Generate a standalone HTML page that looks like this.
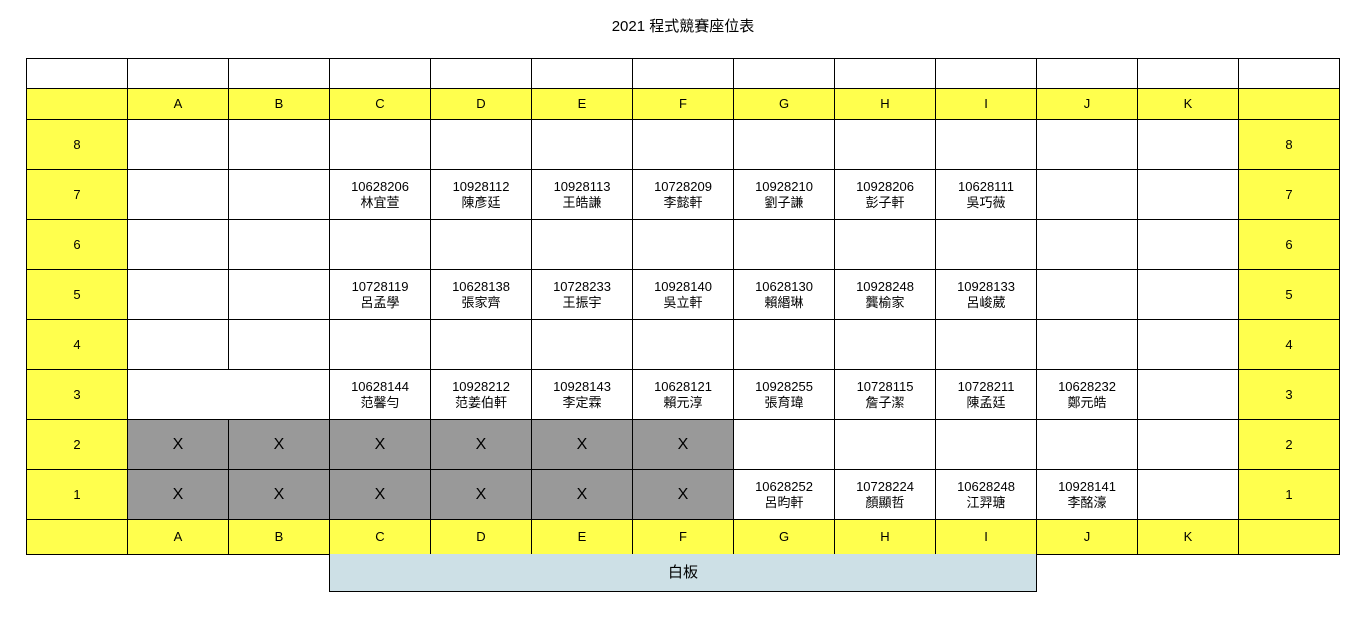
<!DOCTYPE html>
<html><head><meta charset="utf-8"><style>
body{margin:0;background:#fff;width:1366px;height:617px;position:relative;font-family:"Liberation Sans","Noto Sans CJK TC",sans-serif;color:#000}
.title{position:absolute;left:0;width:1366px;top:15px;text-align:center;font-size:15px}
table{position:absolute;left:26px;top:58px;border-collapse:collapse;table-layout:fixed;width:1314px}
td{border:1px solid #000;text-align:center;vertical-align:middle;font-size:13px;line-height:16px;padding:0;overflow:hidden}
.y{background:#ffff4d}
.g{background:#999;font-size:16px}
.wb{position:absolute;left:329px;top:554px;width:706px;height:37px;background:#cde0e6;border:1px solid #000;border-top:none;text-align:center;line-height:38px;font-size:15px}
</style></head><body>
<div class="title">2021 程式競賽座位表</div>
<table>
<colgroup><col style="width:101px"><col style="width:101px"><col style="width:101px"><col style="width:101px"><col style="width:101px"><col style="width:101px"><col style="width:101px"><col style="width:101px"><col style="width:101px"><col style="width:101px"><col style="width:101px"><col style="width:101px"><col style="width:101px"></colgroup>
<tr style="height:30px"><td></td><td></td><td></td><td></td><td></td><td></td><td></td><td></td><td></td><td></td><td></td><td></td><td></td></tr>
<tr style="height:31px" class="y"><td></td><td>A</td><td>B</td><td>C</td><td>D</td><td>E</td><td>F</td><td>G</td><td>H</td><td>I</td><td>J</td><td>K</td><td></td></tr>
<tr style="height:50px"><td class="y">8</td><td></td><td></td><td></td><td></td><td></td><td></td><td></td><td></td><td></td><td></td><td></td><td class="y">8</td></tr>
<tr style="height:50px"><td class="y">7</td><td></td><td></td><td>10628206<br>林宜萱</td><td>10928112<br>陳彥廷</td><td>10928113<br>王皓謙</td><td>10728209<br>李懿軒</td><td>10928210<br>劉子謙</td><td>10928206<br>彭子軒</td><td>10628111<br>吳巧薇</td><td></td><td></td><td class="y">7</td></tr>
<tr style="height:50px"><td class="y">6</td><td></td><td></td><td></td><td></td><td></td><td></td><td></td><td></td><td></td><td></td><td></td><td class="y">6</td></tr>
<tr style="height:50px"><td class="y">5</td><td></td><td></td><td>10728119<br>呂孟學</td><td>10628138<br>張家齊</td><td>10728233<br>王振宇</td><td>10928140<br>吳立軒</td><td>10628130<br>賴緡琳</td><td>10928248<br>龔榆家</td><td>10928133<br>呂峻葳</td><td></td><td></td><td class="y">5</td></tr>
<tr style="height:50px"><td class="y">4</td><td></td><td></td><td></td><td></td><td></td><td></td><td></td><td></td><td></td><td></td><td></td><td class="y">4</td></tr>
<tr style="height:50px"><td class="y">3</td><td colspan="2"></td><td>10628144<br>范馨勻</td><td>10928212<br>范姜伯軒</td><td>10928143<br>李定霖</td><td>10628121<br>賴元淳</td><td>10928255<br>張育瑋</td><td>10728115<br>詹子潔</td><td>10728211<br>陳孟廷</td><td>10628232<br>鄭元皓</td><td></td><td class="y">3</td></tr>
<tr style="height:50px"><td class="y">2</td><td class="g">X</td><td class="g">X</td><td class="g">X</td><td class="g">X</td><td class="g">X</td><td class="g">X</td><td></td><td></td><td></td><td></td><td></td><td class="y">2</td></tr>
<tr style="height:50px"><td class="y">1</td><td class="g">X</td><td class="g">X</td><td class="g">X</td><td class="g">X</td><td class="g">X</td><td class="g">X</td><td>10628252<br>呂昀軒</td><td>10728224<br>顏顯哲</td><td>10628248<br>江羿瑭</td><td>10928141<br>李酩濠</td><td></td><td class="y">1</td></tr>
<tr style="height:35px" class="y"><td></td><td>A</td><td>B</td><td>C</td><td>D</td><td>E</td><td>F</td><td>G</td><td>H</td><td>I</td><td>J</td><td>K</td><td></td></tr>
</table>
<div class="wb">白板</div>
</body></html>
